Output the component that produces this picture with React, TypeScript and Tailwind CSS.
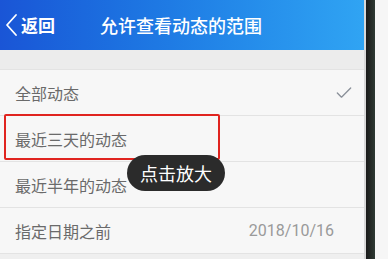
import { Check } from 'lucide-react';

const font = { fontFamily: '"Noto Sans CJK SC", "Noto Sans", sans-serif' };

function Row({ label, right, highlight }: { label: string; right?: React.ReactNode; highlight?: boolean }) {
  return (
    <div className="relative flex h-[46px] items-center justify-between border-b border-[#e3e3e3] pl-[15px] pr-[30px]">
      <span className="text-[16px] text-[#6a6a6a]">{label}</span>
      {right}
      {highlight && (
        <div className="absolute left-[4px] top-[-2px] h-[46px] w-[216px] rounded-[2px] border-2 border-[#e0241f]" />
      )}
    </div>
  );
}

export default function App() {
  return (
    <div className="flex h-[259px] w-[388px] overflow-hidden bg-[#f4f4f4]" style={font}>
      <div className="relative flex w-[364px] flex-col">
        <div className="flex h-[50px] items-center bg-gradient-to-r from-[#1a55d6] to-[#30a4f3] text-white">
          <div className="flex w-[100px] items-center pl-[5px]">
            {/* back chevron */}
            <svg width="14" height="24" viewBox="0 0 14 24" fill="none" stroke="currentColor" strokeWidth="1.8" strokeLinecap="round" strokeLinejoin="round">
              <polyline points="11,2 2,12 11,22" />
            </svg>
            <span className="ml-[2px] text-[17px] font-bold">返回</span>
          </div>
          <span className="text-[18px] font-medium">允许查看动态的范围</span>
        </div>
        <div className="h-[20px] border-b border-[#e3e3e3] bg-[#ececec]" />
        <div className="flex flex-col bg-[#f7f7f7]">
          <Row label="全部动态" right={<Check size={20} strokeWidth={1.6} className="mr-[-20px] text-[#8a9099]" />} />
          <Row label="最近三天的动态" highlight />
          <Row label="最近半年的动态" />
          <Row label="指定日期之前" right={<span className="text-[16px] text-[#9a9a9a]" style={{ fontFamily: 'Roboto, sans-serif' }}>2018/10/16</span>} />
        </div>
        <div className="flex-1 bg-[#efefef]" />
        <div className="absolute left-[127px] top-[155px] flex h-[36px] w-[98px] items-center justify-center rounded-full bg-[#2b2b2b] text-[18px] text-white">
          点击放大
        </div>
      </div>
      <div className="w-[2px] bg-[#d8d8d8]" />
      <div className="w-[9px] bg-gradient-to-r from-[#1a1a1a] to-[#2e3a33]" />
      <div className="flex-1 bg-[#f6f6f6]" />
    </div>
  );
}
